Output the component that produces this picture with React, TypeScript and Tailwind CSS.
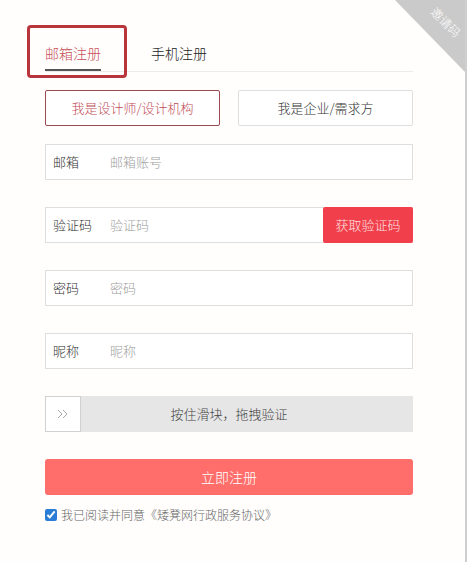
import React from 'react'

const fields = [
  { label: '邮箱', placeholder: '邮箱账号' },
  { label: '验证码', placeholder: '验证码', code: true },
  { label: '密码', placeholder: '密码' },
  { label: '昵称', placeholder: '昵称' },
]

const InviteCorner = () => (
  <div className="absolute right-0 top-0 h-[72px] w-[70px] overflow-hidden">
    <svg width="70" height="72" viewBox="0 0 70 72" className="absolute inset-0">
      <polygon points="0,0 70,0 70,72" fill="#cacaca" />
    </svg>
    <div className="absolute left-[33px] top-[16px] rotate-45 text-[12px] leading-none text-white">
      邀请码
    </div>
  </div>
)

const Field = ({ label, placeholder, code }: { label: string; placeholder: string; code?: boolean }) => (
  <div className="flex h-[36px] items-stretch border border-[#dedede] bg-white">
    <div className="flex w-[64px] items-center pl-[7px] text-[13px] text-[#333]">{label}</div>
    <div className="flex flex-1 items-center text-[13px] text-[#a0a0a0]">{placeholder}</div>
    {code && (
      <button className="my-[-1px] mr-[-1px] w-[90px] rounded-[2px] bg-[#f1404c] text-[13px] text-[#fde0e0]">
        获取验证码
      </button>
    )}
  </div>
)

export default function App() {
  return (
    <div
      className="relative h-[562px] w-[469px] overflow-hidden bg-white font-light"
      style={{ fontFamily: '"Noto Sans CJK SC", "Noto Sans", sans-serif' }}
    >
      <div className="relative h-full w-[467px] border-r-2 border-[#cfcfcf] bg-[#fffefc]">
        <InviteCorner />

        <div className="absolute left-[27px] top-[25px] h-[53px] w-[100px] rounded-[4px] border-[3px] border-[#b8353b]" />

        <div className="flex flex-col pl-[45px] pr-[52px] pt-[43px]">
          <div className="flex gap-[50px] border-b border-[#ececec] text-[14px] leading-[20px]">
            <div className="border-b-2 border-[#555] pb-[6px] text-[#c8505a]">邮箱注册</div>
            <div className="pb-[8px] text-[#222]">手机注册</div>
          </div>

          <div className="mt-[18px] grid grid-cols-2 gap-[18px]">
            <button className="h-[36px] rounded-[2px] border border-[#9c4a50] bg-white text-[13px] text-[#c24a55]">
              我是设计师/设计机构
            </button>
            <button className="h-[36px] rounded-[2px] border border-[#dedede] bg-white text-[13px] text-[#333]">
              我是企业/需求方
            </button>
          </div>

          <div className="mt-[18px] flex flex-col gap-[27px]">
            {fields.map((f) => (
              <Field key={f.label} {...f} />
            ))}

            <div className="relative flex h-[36px] items-stretch bg-[#e6e6e6]">
              <div className="flex w-[36px] items-center justify-center border border-[#d0d0d0] bg-white text-[#aaa]">
                <svg width="12" height="10" viewBox="0 0 12 10" fill="none" stroke="currentColor" strokeWidth="1">
                  <polyline points="1,1 5,5 1,9" />
                  <polyline points="6,1 10,5 6,9" />
                </svg>
              </div>
              <div className="absolute inset-0 flex items-center justify-center text-[13px] text-[#444]">
                按住滑块，拖拽验证
              </div>
            </div>

            <button className="h-[36px] rounded-[3px] bg-[#ff6e6a] text-[14px] text-white">立即注册</button>
          </div>

          <label className="mt-[11px] flex items-center gap-[4px] text-[12px] text-[#666]">
            <input type="checkbox" defaultChecked className="h-[12px] w-[12px] accent-[#2a7dd6]" />
            我已阅读并同意《矮凳网行政服务协议》
          </label>
        </div>
      </div>
    </div>
  )
}
